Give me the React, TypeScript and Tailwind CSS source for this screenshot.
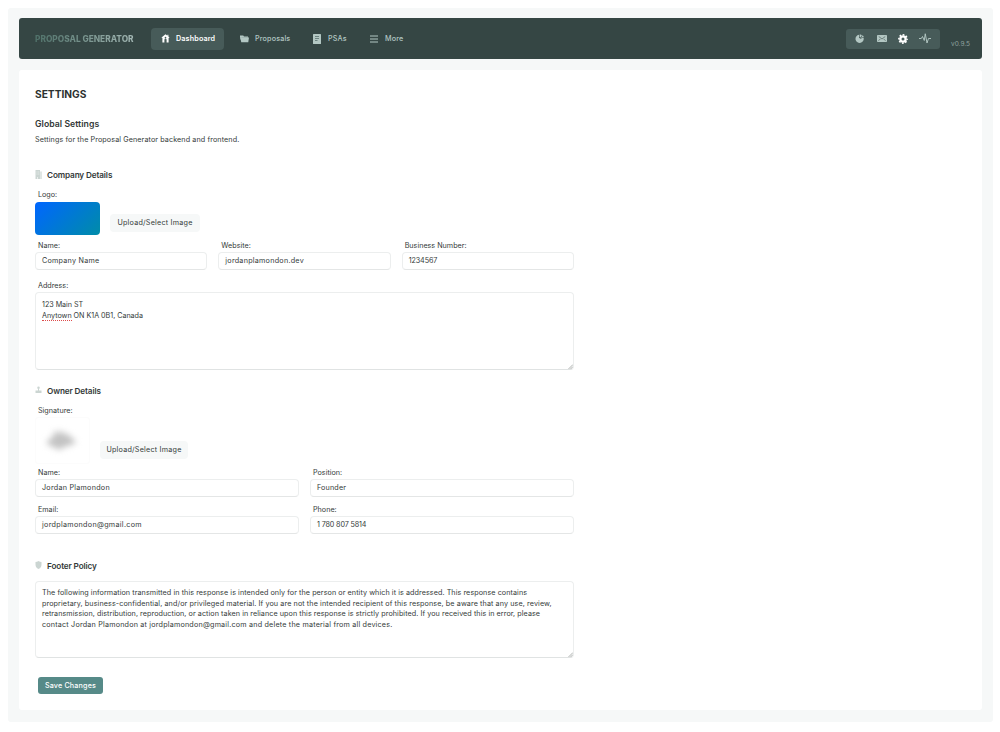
import type { ReactNode } from "react";

const policy = [
  {
    text: "The following information transmitted in this response is intended only for the person or entity which it is addressed. This response contains",
    tracking: "tracking-[0.073px]",
  },
  {
    text: "proprietary, business-confidential, and/or privileged material. If you are not the intended recipient of this response, be aware that any use, review,",
    tracking: "tracking-[0.1px]",
  },
  {
    text: "retransmission, distribution, reproduction, or action taken in reliance upon this response is strictly prohibited. If you received this in error, please",
    tracking: "tracking-[0.065px]",
  },
  {
    text: "contact Jordan Plamondon at jordplamondon@gmail.com and delete the material from all devices.",
    tracking: "tracking-[0.195px]",
  },
];

function HomeIcon() {
  return (
    <svg className="w-[9px] h-[9px]" viewBox="0 0 18 18" fill="currentColor">
      <path d="M9 .5 1 6.8l1 1.4.8-.6V17h4v-5.5a2.2 2.2 0 0 1 4.4 0V17h4V7.6l.8.6 1-1.4-2.2-1.8V1.5h-2v2L9 .5Zm0 5.2a1.7 1.7 0 1 1 0 3.4 1.7 1.7 0 0 1 0-3.4Z" fillRule="evenodd" />
    </svg>
  );
}

function FolderIcon() {
  return (
    <svg className="w-[9px] h-[8px]" viewBox="0 0 18 16" fill="currentColor">
      <path d="M0 1h6.5l1.5 2h8v2.5H3L1.500 10 0 4V1Z" />
      <path d="M2.500 5H18l-1.500 9.500h-14L.8 6.500 2.500 5Z" />
    </svg>
  );
}

function DocIcon() {
  return (
    <svg className="w-[8px] h-[10px]" viewBox="0 0 16 20">
      <rect width="16" height="20" rx="1" fill="currentColor" />
      <path d="M4 5h8M4 9h8M4 13h5" stroke="#5f7572" strokeWidth="1.7" />
    </svg>
  );
}

function MenuIcon() {
  return (
    <svg className="w-[8px] h-[8px]" viewBox="0 0 16 16" stroke="currentColor" strokeWidth="2">
      <path d="M0 2h16M0 8h16M0 14h16" />
    </svg>
  );
}

function PieIcon() {
  return (
    <svg className="w-[9px] h-[9px]" viewBox="0 0 18 18" fill="currentColor">
      <path d="M8 1.5v6l3 2L17 7A8.200 8.200 0 1 1 8 1.500Z" />
      <path d="M9.300.8c2.500 0 3.900.6 4.700 1.400L11 6.800 9.300 6V.8ZM15 2.300c1.500 1.100 2.300 2 2.500 3.200l-5.200 2.300L15 2.300Z" />
    </svg>
  );
}

function MailIcon() {
  return (
    <svg className="w-[10px] h-[7px]" viewBox="0 0 20 14">
      <rect width="20" height="14" rx="1.5" fill="currentColor" />
      <path d="m3.5 3 6.5 5 6.5-5M3 11.5 6.500 8M17 11.500 13.500 8" fill="none" stroke="#4a5e5b" strokeWidth="1.4" />
    </svg>
  );
}

function GearIcon() {
  return (
    <svg className="w-[10px] h-[10px] text-white" viewBox="0 0 20 20">
      <circle cx="10" cy="10" r="5.3" fill="none" stroke="currentColor" strokeWidth="4.6" />
      <circle cx="10" cy="10" r="8.3" fill="none" stroke="currentColor" strokeWidth="3" strokeDasharray="3.5 3.018" strokeDashoffset="1.75" />
    </svg>
  );
}

function PulseIcon() {
  return (
    <svg className="w-[12px] h-[11px]" viewBox="0 0 24 22" fill="none" stroke="currentColor" strokeWidth="1.9">
      <path d="M0 11h4.500L7 7l3.500 8L12.500 1.500 16 20l3-9h5" strokeLinejoin="round" />
    </svg>
  );
}

function NavItem({ icon, label, width, active }: { icon: ReactNode; label: string; width: string; active?: boolean }) {
  return (
    <a className={`${width} h-[22px] flex items-center rounded-[4px] text-[7.2px] tracking-[0.15px] ${active ? "bg-[#475b59] text-white font-semibold" : "text-[#b3c7c3] font-medium"}`}>
      <span className="w-[25px] pl-[10px] shrink-0">{icon}</span>
      <span className="pt-[2px]">{label}</span>
    </a>
  );
}

function Heading({ icon, children }: { icon: ReactNode; children: string }) {
  return (
    <h3 className="h-4 flex items-center text-[8.2px] font-semibold tracking-[-0.13px] text-[#333938]">
      <span className="w-[12px] pb-[2px] text-[#cbd5d2]">{icon}</span>
      <span className="pt-px">{children}</span>
    </h3>
  );
}

function Label({ children }: { children: string }) {
  return <div className="h-[12px] pl-[3px] leading-[14px]">{children}</div>;
}

function Field({ label, value, tracking = "tracking-[0.25px]" }: { label: string; value: string; tracking?: string }) {
  return (
    <div className="flex-1">
      <Label>{label}</Label>
      <div className={`${tracking} mt-px h-[18px] px-[6px] flex items-center rounded-[4px] border border-[#eceeee] border-b-[#e4e6e6] bg-white`}>
        {value}
      </div>
    </div>
  );
}

function TextArea({ size, children }: { size: string; children: ReactNode }) {
  return (
    <div className={`${size} relative px-[6px] rounded-[4px] border border-[#eceeee] border-b-[#e0e3e3] bg-white leading-[10.6px]`}>
      {children}
      <svg className="absolute right-0 bottom-0 w-[5px] h-[5px]" viewBox="0 0 10 10" stroke="#8d9291" strokeWidth="1.4">
        <path d="M1 10 10 1M5 10l5-5" />
      </svg>
    </div>
  );
}

function UploadButton({ width }: { width: string }) {
  return (
    <button className={`${width} h-[18px] rounded-[4px] bg-[#f6f8f8] text-[7.2px] tracking-[0.22px] whitespace-nowrap`}>
      Upload/Select Image
    </button>
  );
}

export default function App() {
  return (
    <div className="w-[1000px] h-[732px] bg-white p-2 pr-[7px] font-['Inter',sans-serif] text-[7.2px] text-[#343a39]">
      <div className="h-[714px] rounded-[3px] bg-[#f6f8f8] pt-[10px] px-[11px]">
        <header className="h-[41px] rounded-[3px] bg-[#354644] flex items-center px-4 pr-[12px]">
          <div className="w-[116px] pt-[2px] text-[8.3px] font-extrabold tracking-[0.01px] whitespace-nowrap">
            <span className="bg-linear-to-r from-[#4f7169] to-[#a3b7b4] bg-clip-text text-transparent">PROPOSAL GENERATOR</span>
          </div>
          <nav className="flex items-center">
            <NavItem icon={<HomeIcon />} label="Dashboard" width="w-[73px]" active />
            <div className="ml-[6px] flex gap-[4px]">
              <NavItem icon={<FolderIcon />} label="Proposals" width="w-[69px]" />
              <NavItem icon={<DocIcon />} label="PSAs" width="w-[53px]" />
              <NavItem icon={<MenuIcon />} label="More" width="w-[50px]" />
            </div>
          </nav>
          <div className="ml-auto w-[94px] h-[20px] rounded-[3px] bg-[#475b59] text-[#b3c7c3] flex items-center pl-[9px]">
            <PieIcon />
            <span className="ml-[13px]">
              <MailIcon />
            </span>
            <span className="ml-[11px]">
              <GearIcon />
            </span>
            <span className="ml-[11px]">
              <PulseIcon />
            </span>
          </div>
          <span className="ml-[11px] mt-[12px] text-[6.5px] text-[#8fa19e]">v0.9.5</span>
        </header>

        <main className="mt-[11px] h-[640px] rounded-[3px] bg-white px-4 pt-4">
          <h1 className="h-4 leading-[17px] text-[10.2px] font-bold text-[#2c3130]">SETTINGS</h1>
          <h2 className="mt-[14px] h-4 leading-4 text-[8.7px] font-semibold tracking-[0.05px] text-[#333938]">Global Settings</h2>
          <p className="mt-[2px] h-[12px] leading-[12px] tracking-[0.1px]">Settings for the Proposal Generator backend and frontend.</p>

          <div className="w-[539px]">
            <section className="mt-[21px]">
              <Heading
                icon={
                  <svg className="w-[7px] h-[9px]" viewBox="0 0 14 18">
                    <path d="M1 0h9v18H1z" fill="currentColor" />
                    <path d="M10 3h4v15h-4z" fill="currentColor" opacity=".6" />
                    <path d="M3 4h2M6.500 4h2M3 8h2M6.500 8h2M5 14v4" stroke="#fff" strokeWidth="1.2" />
                  </svg>
                }
              >
                Company Details
              </Heading>
              <div className="mt-[6px] leading-3 h-3 pl-[3px]">Logo:</div>
              <div className="mt-px flex items-end gap-[10px] h-[33px]">
                <div className="w-[65px] h-[33px] rounded-[4px] bg-linear-[135deg] from-[#0066ff] to-[#008ca8]" />
                <div className="h-[21px]">
                  <UploadButton width="w-[90px]" />
                </div>
              </div>
              <div className="mt-[4px] flex gap-[11px]">
                <Field label="Name:" value="Company Name" />
                <Field label="Website:" value="jordanplamondon.dev" />
                <Field label="Business Number:" value="1234567" tracking="tracking-[-0.1px]" />
              </div>
              <div className="mt-[9px] mb-px">
                <Label>Address:</Label>
              </div>
              <TextArea size="h-[78px] pt-[7px] tracking-[-0.03px]">
                <div>123 Main ST</div>
                <div>
                  <span className="border-b border-dotted border-[#dd4b4b]">Anytown</span> ON K1A 0B1, Canada
                </div>
              </TextArea>
            </section>

            <section className="mt-[13px]">
              <Heading
                icon={
                  <svg className="w-[7px] h-[8px]" viewBox="0 0 14 16" fill="currentColor">
                    <circle cx="7" cy="3.5" r="2.5" />
                    <path d="M6 6h2v3h5v5H1V9h5z" />
                  </svg>
                }
              >
                Owner Details
              </Heading>
              <div className="mt-[5px]">
                <Label>Signature:</Label>
              </div>
              <div className="mt-px h-[48px] flex gap-[10px]">
                <div className="w-[55px] h-[47px] flex items-center justify-center rounded-[3px] border border-[#fcfcfc]">
                  <svg className="w-[44px] h-[34px] mr-[4px] mb-[2px] blur-[3px]" viewBox="0 0 44 34" fill="#b4b4b4">
                    <path d="M8 18l6-4 2-7 4 4 3-4 3 5 4-1 3 5 5 3-6 3-7 2-5 3-5-3-6-2z" opacity=".8" />
                  </svg>
                </div>
                <div className="pt-[24px]">
                  <UploadButton width="w-[88px]" />
                </div>
              </div>
              <div className="mt-px flex gap-[11px]">
                <Field label="Name:" value="Jordan Plamondon" />
                <Field label="Position:" value="Founder" tracking="tracking-[0.15px]" />
              </div>
              <div className="mt-[6px] flex gap-[11px]">
                <Field label="Email:" value="jordplamondon@gmail.com" tracking="tracking-[0.3px]" />
                <Field label="Phone:" value="1 780 807 5814" tracking="tracking-[-0.14px]" />
              </div>
            </section>

            <section className="mt-[24px]">
              <Heading
                icon={
                  <svg className="w-[7px] h-[8px]" viewBox="0 0 14 16" fill="currentColor">
                    <path d="M7 0c2 1.500 4 2 6 2v5c0 4-2 7-6 9-4-2-6-5-6-9V2c2 0 4-.5 6-2Z" />
                  </svg>
                }
              >
                Footer Policy
              </Heading>
              <div className="mt-[7px]">
                <TextArea size="h-[77px] pt-[6px]">
                  {policy.map((line) => (
                    <div key={line.text} className={`${line.tracking} whitespace-nowrap`}>{line.text}</div>
                  ))}
                </TextArea>
              </div>
            </section>

            <button className="mt-[19px] ml-[3px] w-[65px] h-[17px] rounded-[3px] bg-[#568a88] text-white font-medium tracking-[0.15px] pt-px flex items-center justify-center whitespace-nowrap">
              Save Changes
            </button>
          </div>
        </main>
      </div>
    </div>
  );
}
